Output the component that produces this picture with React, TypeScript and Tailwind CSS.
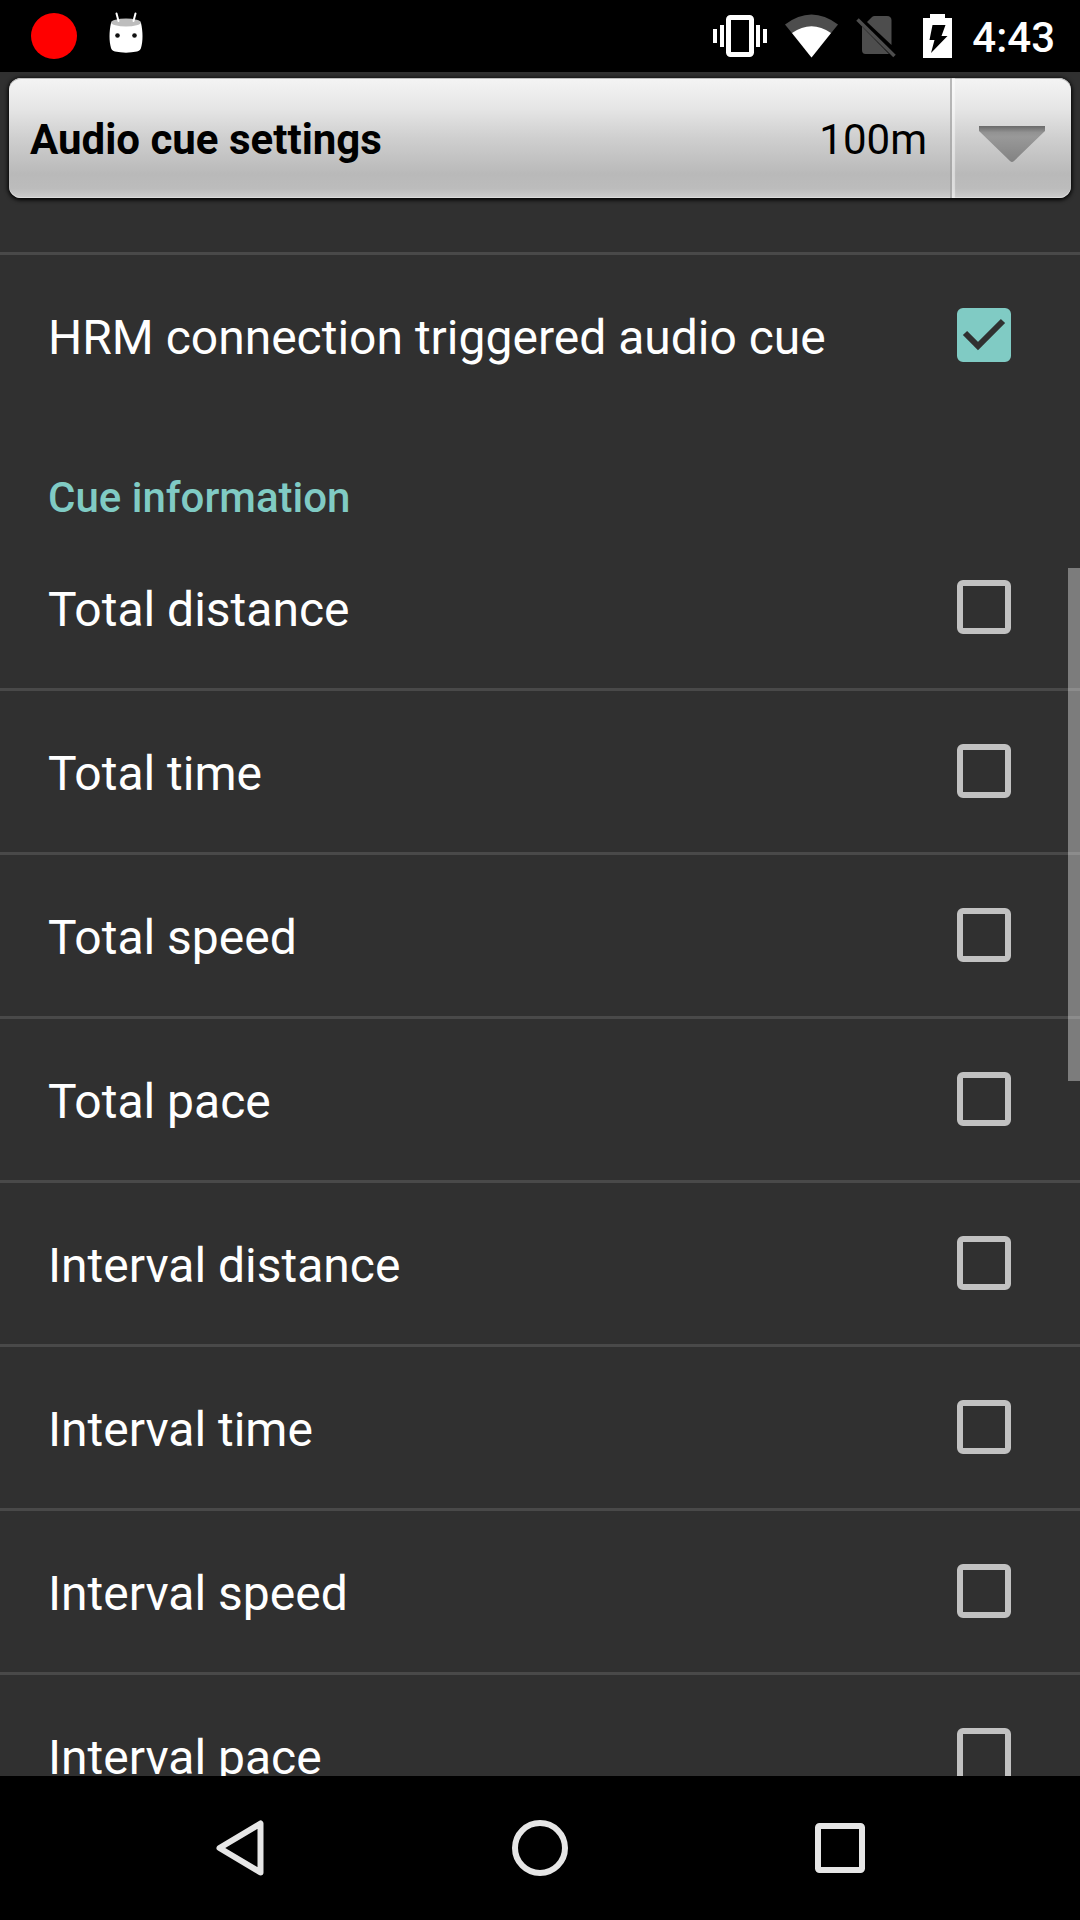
import { useState } from "react";

const cues = [
  "Total distance",
  "Total time",
  "Total speed",
  "Total pace",
  "Interval distance",
  "Interval time",
  "Interval speed",
  "Interval pace",
];

function StatusBar() {
  return (
    <header className="flex h-[72px] shrink-0 items-center justify-between bg-black pl-[31px] pr-[25px]">
      <div className="flex items-center gap-8">
        <span className="size-[46px] rounded-full bg-[#ff0000]" />
        <svg className="mb-[6px] h-[42px] w-[34px]" viewBox="0 0 34 42" aria-hidden="true">
          <path d="M2 11C0 20 0 29 2 36C2.500 38 4 39 6 39.500C13 41 21 41 28 39.500C30 39 31.500 38 32 36C34 29 34 20 32 11Z" fill="#fff" />
          <ellipse cx="17" cy="10.500" rx="15" ry="4" fill="#bdbdbd" />
          <path d="M7.500 1.500L9.500 9M26.500 1.500L24.500 9" stroke="#fff" strokeWidth="2" strokeLinecap="round" />
          <circle cx="8.500" cy="23.500" r="2.300" fill="#111" />
          <circle cx="25.500" cy="23.500" r="2.300" fill="#111" />
        </svg>
      </div>
      <div className="flex items-center">
        <svg className="h-[44px] w-[54px]" viewBox="0 0 54 44" aria-hidden="true">
          <rect x="15.500" y="3.500" width="23" height="37" rx="2" fill="none" stroke="#fff" strokeWidth="5" />
          <path d="M0 15h4v14H0zM7 11h4v22H7zM43 11h4v22h-4zM50 15h4v14h-4z" fill="#fff" />
        </svg>
        <svg className="ml-[18px] h-[44px] w-[53px]" viewBox="0 0 53 44" aria-hidden="true">
          <path d="M0 10.500Q26.500-9.500 53 10.500L26.500 43.500Z" fill="#4d4d4d" />
          <path d="M7 19Q26.500 5.500 46 19L26.500 43.500Z" fill="#fff" />
        </svg>
        <svg className="ml-[18px] h-[44px] w-[41px]" viewBox="0 0 41 44" aria-hidden="true">
          <path d="M11 8L16 3Q17 2 18.500 2H31Q35.500 2 35.500 6.500V31Z" fill="#4d4d4d" />
          <path d="M6 12.500L33 40H9.500Q6 40 6 36Z" fill="#4d4d4d" />
          <path d="M1.500 5.500L38.500 42" stroke="#4d4d4d" strokeWidth="3.500" />
        </svg>
        <svg className="ml-[26px] h-[44px] w-[29px]" viewBox="0 0 29 44" aria-hidden="true">
          <path d="M0 4H7V0H22V4H29V44H0Z" fill="#fff" />
          <path d="M9.500 11H22.500L18.500 22H24.500L8 39L11.500 26H6.500Z" fill="#000" />
        </svg>
        <time className="ml-5 pt-1 text-[42px] leading-[48px] font-medium text-white">4:43</time>
      </div>
    </header>
  );
}

function CueSpinner() {
  return (
    <div className="px-[9px] py-[6px]">
      <div className="relative flex h-[120px] items-center rounded-[12px] bg-[linear-gradient(to_bottom,#f4f4f4_0%,#e6e6e6_25%,#cfcfcf_50%,#b9b9b9_80%,#bcbcbc_92%,#cccccc_100%)] shadow-[0_1px_4px_1px_#000,inset_0_1px_0_#bbb,inset_0_-1px_0_#ddd]">
        <label htmlFor="cue-profile" className="pt-1 pl-[21px] text-[42px] leading-[48px] font-bold text-black">
          Audio cue settings
        </label>
        <select
          id="cue-profile"
          className="h-full min-w-0 flex-1 appearance-none bg-transparent pt-1 pr-[144px] text-right text-[42px] leading-[48px] text-black outline-none [text-align-last:right]"
        >
          <option>100m</option>
        </select>
        <div className="pointer-events-none absolute inset-y-0 right-0 flex w-[121px] items-center justify-center border-l-2 border-[#a0a0a0]/70 pt-3 shadow-[inset_4px_0_1px_-1px_#ffffff80]">
          <svg className="h-[38px] w-[68px]" viewBox="0 0 68 38" aria-hidden="true">
            <defs>
              <linearGradient id="arrow" x1="0" y1="0" x2="0" y2="1">
                <stop offset="0" stopColor="#6a6a6a" />
                <stop offset="0.180" stopColor="#929292" />
                <stop offset="0.300" stopColor="#999" />
                <stop offset="1" stopColor="#828282" />
              </linearGradient>
            </defs>
            <path d="M1 1H67V6L36 36Q34 38 32 36L1 6Z" fill="url(#arrow)" />
          </svg>
        </div>
      </div>
    </div>
  );
}

function CueRow({ label, initial = false }: { label: string; initial?: boolean }) {
  const [checked, setChecked] = useState(initial);
  return (
    <label className="flex h-[161px] items-center justify-between pl-12 pr-[69px]">
      <span className="pt-1 text-[48px] leading-[56px] text-white">{label}</span>
      <span className="relative mb-0.5 size-[54px] shrink-0">
        <input
          type="checkbox"
          checked={checked}
          onChange={(e) => setChecked(e.target.checked)}
          className="block size-[54px] appearance-none rounded-[6px] border-6 border-[#c1c1c1] checked:border-[#80cbc4] checked:bg-[#80cbc4]"
        />
        {checked && (
          <svg className="pointer-events-none absolute inset-0" viewBox="0 0 54 54" aria-hidden="true">
            <path d="M8 25L21 38L46 13" fill="none" stroke="#303030" strokeWidth="6" />
          </svg>
        )}
      </span>
    </label>
  );
}

function NavBar() {
  const button = "flex w-[300px] items-center justify-center";
  return (
    <nav className="flex h-36 shrink-0 justify-center bg-black">
      <button type="button" aria-label="Back" className={button}>
        <svg className="size-[60px]" viewBox="0 0 60 60" fill="none" stroke="#e6e6e6" strokeWidth="6" strokeLinejoin="round" aria-hidden="true">
          <path d="M50.500 5.500V54.500L9.500 30Z" />
        </svg>
      </button>
      <button type="button" aria-label="Home" className={button}>
        <svg className="size-[60px]" viewBox="0 0 60 60" fill="none" stroke="#e6e6e6" strokeWidth="6" aria-hidden="true">
          <circle cx="30" cy="30" r="25" />
        </svg>
      </button>
      <button type="button" aria-label="Overview" className={button}>
        <svg className="size-[60px]" viewBox="0 0 60 60" fill="none" stroke="#e6e6e6" strokeWidth="6" aria-hidden="true">
          <rect x="8" y="8" width="44" height="44" rx="1.500" />
        </svg>
      </button>
    </nav>
  );
}

export default function App() {
  return (
    <div className="flex h-screen flex-col overflow-hidden bg-[#303030] font-[Roboto,sans-serif]">
      <StatusBar />
      <CueSpinner />
      <main className="relative min-h-0 flex-1">
        <div className="h-full overflow-y-auto [scrollbar-width:none]">
          <section className="mt-12 border-t-3 border-[#494949]">
            <CueRow label="HRM connection triggered audio cue" initial />
          </section>
          <section>
            <h2 className="px-12 pt-[58px] pb-[5px] text-[42px] leading-[48px] font-medium text-[#80cbc4]">Cue information</h2>
            <ul className="divide-y-3 divide-[#494949]">
              {cues.map((cue) => (
                <li key={cue}>
                  <CueRow label={cue} />
                </li>
              ))}
            </ul>
          </section>
        </div>
        <div className="pointer-events-none absolute top-[364px] right-0 h-[513px] w-3 bg-white/37" />
      </main>
      <NavBar />
    </div>
  );
}
